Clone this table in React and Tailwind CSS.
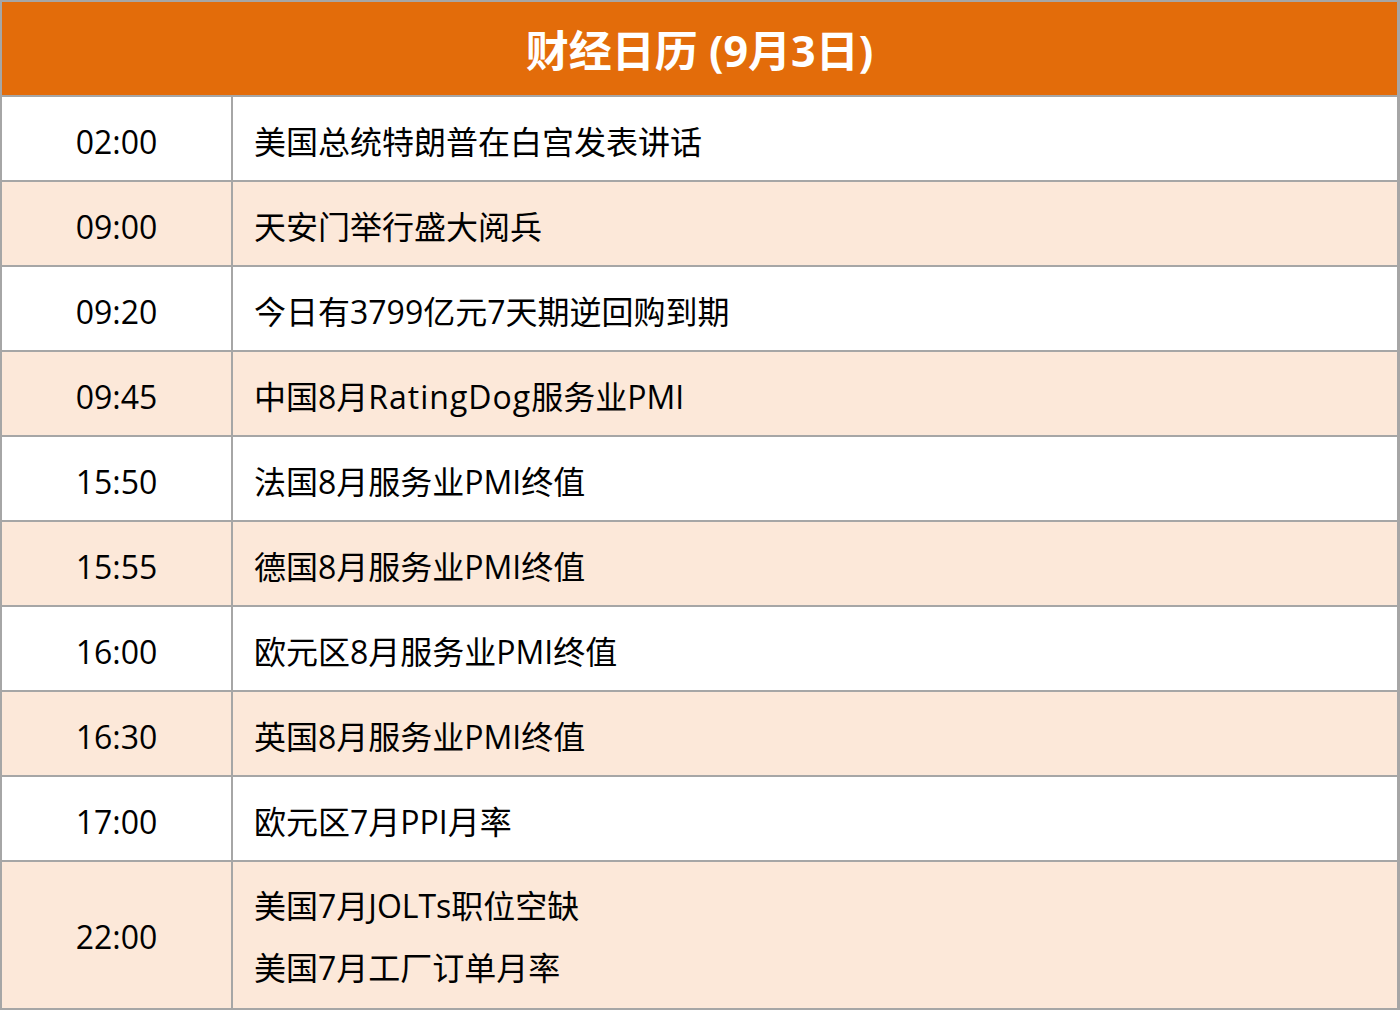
export default function App() {
  const rows = [
    ["02:00", "美国总统特朗普在白宫发表讲话"],
    ["09:00", "天安门举行盛大阅兵"],
    ["09:20", "今日有3799亿元7天期逆回购到期"],
    ["09:45", (
      <>
        中国8月<span className="tracking-[1px]">RatingDog</span>服务业PMI
      </>
    )],
    ["15:50", "法国8月服务业PMI终值"],
    ["15:55", "德国8月服务业PMI终值"],
    ["16:00", "欧元区8月服务业PMI终值"],
    ["16:30", "英国8月服务业PMI终值"],
    ["17:00", "欧元区7月PPI月率"],
  ];
  const font = { fontFamily: '"Open Sans", "Noto Sans CJK SC", sans-serif' };
  return (
    <div
      className="w-[1400px] h-[1010px] border-2 border-r-[3px] border-[#a6a6a6] flex flex-col bg-white text-black"
      style={font}
    >
      <div className="h-[95px] shrink-0 bg-[#e36c0a] border-b-2 border-[#a6a6a6] flex items-center justify-center text-white font-bold text-[43px] leading-none pt-[4px]">
        财经日历 (9月3日)
      </div>
      {rows.map(([t, item], i) => (
        <div
          key={t}
          className={`h-[85px] shrink-0 flex border-b-2 border-[#a6a6a6] ${i % 2 === 1 ? "bg-[#fce8d9]" : "bg-white"}`}
        >
          <div className="w-[231px] shrink-0 border-r-2 border-[#a6a6a6] flex items-center justify-center text-[32px] leading-none pt-[6px]">
            {t}
          </div>
          <div className="flex-1 flex items-center pl-[21px] text-[32px] leading-none pt-[6px]">
            {item}
          </div>
        </div>
      ))}
      <div className="flex-1 flex bg-[#fce8d9]">
        <div className="w-[231px] shrink-0 border-r-2 border-[#a6a6a6] flex items-center justify-center text-[32px] leading-none pt-[4px]">
          22:00
        </div>
        <div className="flex-1 flex flex-col justify-center pl-[21px] text-[32px] leading-none pt-[4px] gap-[30px]">
          <div>美国7月JOLTs职位空缺</div>
          <div>美国7月工厂订单月率</div>
        </div>
      </div>
    </div>
  );
}
